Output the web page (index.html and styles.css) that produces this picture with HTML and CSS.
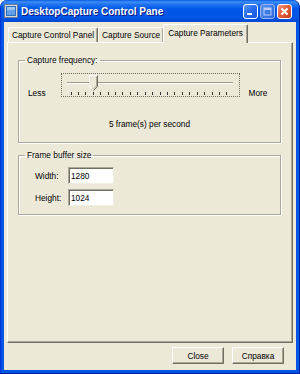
FILE: index.html
```html
<!DOCTYPE html>
<html lang="en">
<head>
    <meta charset="UTF-8">
    <title>DesktopCapture Control Pane</title>
    <link rel="stylesheet" href="styles.css">
</head>
<body>
    <div class="window">
        <div class="titlebar">
            <svg class="app-icon" width="14" height="14" viewBox="0 0 14 14">
                <rect x="0.5" y="0.5" width="13" height="13" fill="#d8d8d8" stroke="#6d7f98"/>
                <rect x="2" y="2" width="10" height="10" fill="#2e6fc4"/>
                <rect x="3" y="3" width="8" height="8" fill="#5fa0e8"/>
                <rect x="3" y="3" width="8" height="3" fill="#9cc6f2"/>
            </svg>
            <span class="title">DesktopCapture Control Pane</span>
            <div class="caption-buttons">
                <span class="cap-btn">
                    <svg width="13" height="13" viewBox="0 0 13 13"><rect x="3" y="8" width="5" height="2" fill="#fff"/></svg>
                </span>
                <span class="cap-btn disabled">
                    <svg width="13" height="13" viewBox="0 0 13 13"><rect x="3" y="3" width="7" height="7" fill="none" stroke="#b9cdf5" stroke-width="1"/><rect x="3" y="3" width="7" height="2" fill="#b9cdf5"/></svg>
                </span>
                <span class="cap-btn close">
                    <svg width="13" height="13" viewBox="0 0 13 13"><path d="M3.5 3.5 L9.5 9.5 M9.5 3.5 L3.5 9.5" stroke="#fff" stroke-width="2"/></svg>
                </span>
            </div>
        </div>

        <div class="client">
            <div class="tabs">
                <div class="tab">Capture Control Panel</div>
                <div class="tab">Capture Source</div>
                <div class="tab active">Capture Parameters</div>
            </div>

            <div class="tab-page">
                <fieldset class="group freq">
                    <legend>Capture frequency:</legend>
                    <div class="slider-row">
                        <span class="slider-label">Less</span>
                        <div class="slider">
                            <div class="track"></div>
                            <div class="ticks">
                                <i></i><i></i><i></i><i></i><i></i><i></i><i></i><i></i><i></i><i></i><i></i>
                                <i></i><i></i><i></i><i></i><i></i><i></i><i></i><i></i><i></i><i></i><i></i>
                            </div>
                            <svg class="thumb" width="9" height="16" viewBox="0 0 9 16">
                                <path d="M0.5 11.5 L0.5 0.5 L8.5 0.5 L8.5 11.5 L4.5 15.5 Z" fill="#ece9d8"/>
                                <path d="M0.5 11.5 L0.5 0.5 L8 0.5" fill="none" stroke="#fff"/>
                                <path d="M8.5 0.5 L8.5 11.5 L4.5 15.5" fill="none" stroke="#716f64"/>
                                <path d="M7.5 1.5 L7.5 11 L4.5 14" fill="none" stroke="#aca899"/>
                                <path d="M0.5 11.5 L4 15" fill="none" stroke="#fff"/>
                            </svg>
                        </div>
                        <span class="slider-label">More</span>
                    </div>
                    <div class="rate">5 frame(s) per second</div>
                </fieldset>

                <fieldset class="group buffer">
                    <legend>Frame buffer size</legend>
                    <div class="field first">
                        <label for="width">Width:</label>
                        <input type="text" id="width" value="1280">
                    </div>
                    <div class="field">
                        <label for="height">Height:</label>
                        <input type="text" id="height" value="1024">
                    </div>
                </fieldset>
            </div>

            <div class="buttons">
                <button type="button">Close</button>
                <button type="button">Справка</button>
            </div>
        </div>
    </div>
</body>
</html>
```

FILE: styles.css
```css
body {
    margin: 0;
    font-family: "Liberation Sans", Arial, sans-serif;
    font-size: 8.3px;
    color: #000;
    background: #fff;
}

.window {
    width: 300px;
    height: 374px;
    box-sizing: border-box;
    display: flex;
    flex-direction: column;
    padding: 0 3px 3px;
    background: #0055e5;
    border-left: 1px solid #0831d9;
    border-right: 1px solid #001ea0;
    border-bottom: 1px solid #001ea0;
    border-radius: 7px 7px 0 0;
}

.titlebar {
    height: 22px;
    margin: 0 -3px;
    padding: 0 4px 0 3px;
    display: flex;
    align-items: center;
    border-radius: 7px 7px 0 0;
    background: linear-gradient(to bottom, #0a5be3 0%, #3d8ff7 9%, #2676f0 18%, #0058e8 40%, #0055e5 80%, #0046d2 100%);
}

.app-icon {
    flex: none;
}

.title {
    margin-left: 3px;
    color: #fff;
    font-weight: bold;
    font-size: 10px;
    text-shadow: 1px 1px #0a1883;
}

.caption-buttons {
    margin-left: auto;
    margin-right: 3px;
    display: flex;
    gap: 2px;
}

.cap-btn {
    width: 15px;
    height: 15px;
    box-sizing: border-box;
    display: flex;
    align-items: center;
    justify-content: center;
    border: 1px solid #fff;
    border-radius: 3px;
    background: linear-gradient(135deg, #5a9bff 0%, #2a6ff0 45%, #1953dc 100%);
}

.cap-btn.disabled {
    border-color: #9ab8f0;
    background: linear-gradient(135deg, #5c93f0 0%, #3f7be8 50%, #3068dc 100%);
}

.cap-btn.close {
    background: linear-gradient(135deg, #f09a7c 0%, #e2603c 45%, #c3401c 100%);
}

.client {
    flex: 1;
    display: flex;
    flex-direction: column;
    background: #ece9d8;
}

.tabs {
    display: flex;
    align-items: flex-end;
    height: 20px;
    padding-left: 4px;
    position: relative;
    z-index: 1;
}

.tab {
    height: 15px;
    box-sizing: border-box;
    padding: 0 3px;
    line-height: 14px;
    white-space: nowrap;
    border-top: 1px solid #fff;
    border-left: 1px solid #fff;
    border-right: 1px solid #716f64;
    border-radius: 2px 2px 0 0;
    box-shadow: inset -1px 0 #aca899;
}

.tab.active {
    height: 19px;
    margin: 0 -2px -1px -1px;
    padding: 0 4px;
    line-height: 16px;
    background: #ece9d8;
}

.tab-page {
    height: 301px;
    box-sizing: border-box;
    margin: 0 3px;
    border: 1px solid;
    border-color: #fff #716f64 #716f64 #fff;
    box-shadow: inset -1px -1px #aca899;
    display: flex;
    flex-direction: column;
}

.group {
    margin: 12px 11px 0 10px;
    padding: 0;
    border: 1px solid #aca899;
    box-shadow: inset 1px 1px #fff, 1px 1px #fff;
    min-width: 0;
}

.group legend {
    margin-left: 6px;
    padding: 0 2px;
    line-height: 10px;
}

.freq {
    padding-bottom: 13px;
}

.slider-row {
    display: flex;
    margin-top: 8px;
    padding-left: 9px;
}

.slider-label {
    margin-top: 15px;
    line-height: 10px;
}

.slider {
    width: 179px;
    height: 24px;
    box-sizing: border-box;
    margin: 0 9px 0 15px;
    border: 1px dotted #6f6d66;
    position: relative;
}

.track {
    position: absolute;
    left: 5px;
    top: 8px;
    width: 166px;
    height: 2px;
    box-sizing: border-box;
    border-top: 1px solid #9d9a8c;
    border-bottom: 1px solid #fff;
}

.ticks {
    position: absolute;
    left: 9px;
    top: 18px;
    width: 157px;
    display: flex;
    justify-content: space-between;
}

.ticks i {
    width: 1px;
    height: 3px;
    background: #333;
}

.thumb {
    position: absolute;
    left: 27px;
    top: 1px;
}

.rate {
    margin-top: 21px;
    line-height: 10px;
    text-align: center;
}

.buffer {
    margin-top: 7px;
    padding-bottom: 8px;
}

.field {
    display: flex;
    align-items: center;
    margin-top: 5px;
    padding-left: 16px;
}

.field.first {
    margin-top: 7px;
}

.field label {
    width: 33px;
}

.field input {
    width: 46px;
    height: 17px;
    box-sizing: border-box;
    margin: 0;
    padding: 0 2px;
    font-family: inherit;
    font-size: 8.3px;
    border: 1px solid;
    border-color: #aca899 #f1efe2 #f1efe2 #aca899;
    box-shadow: inset 1px 1px #716f64;
    background: #fff;
    outline: none;
}

.buttons {
    display: flex;
    justify-content: flex-end;
    gap: 8px;
    margin: 4px 12px 0 0;
}

.buttons button {
    width: 52px;
    height: 17px;
    padding: 0;
    font-family: inherit;
    font-size: 8.3px;
    background: #ece9d8;
    border: 1px solid;
    border-color: #fff #716f64 #716f64 #fff;
    box-shadow: inset -1px -1px #aca899;
    border-radius: 0;
    color: #000;
}
```
